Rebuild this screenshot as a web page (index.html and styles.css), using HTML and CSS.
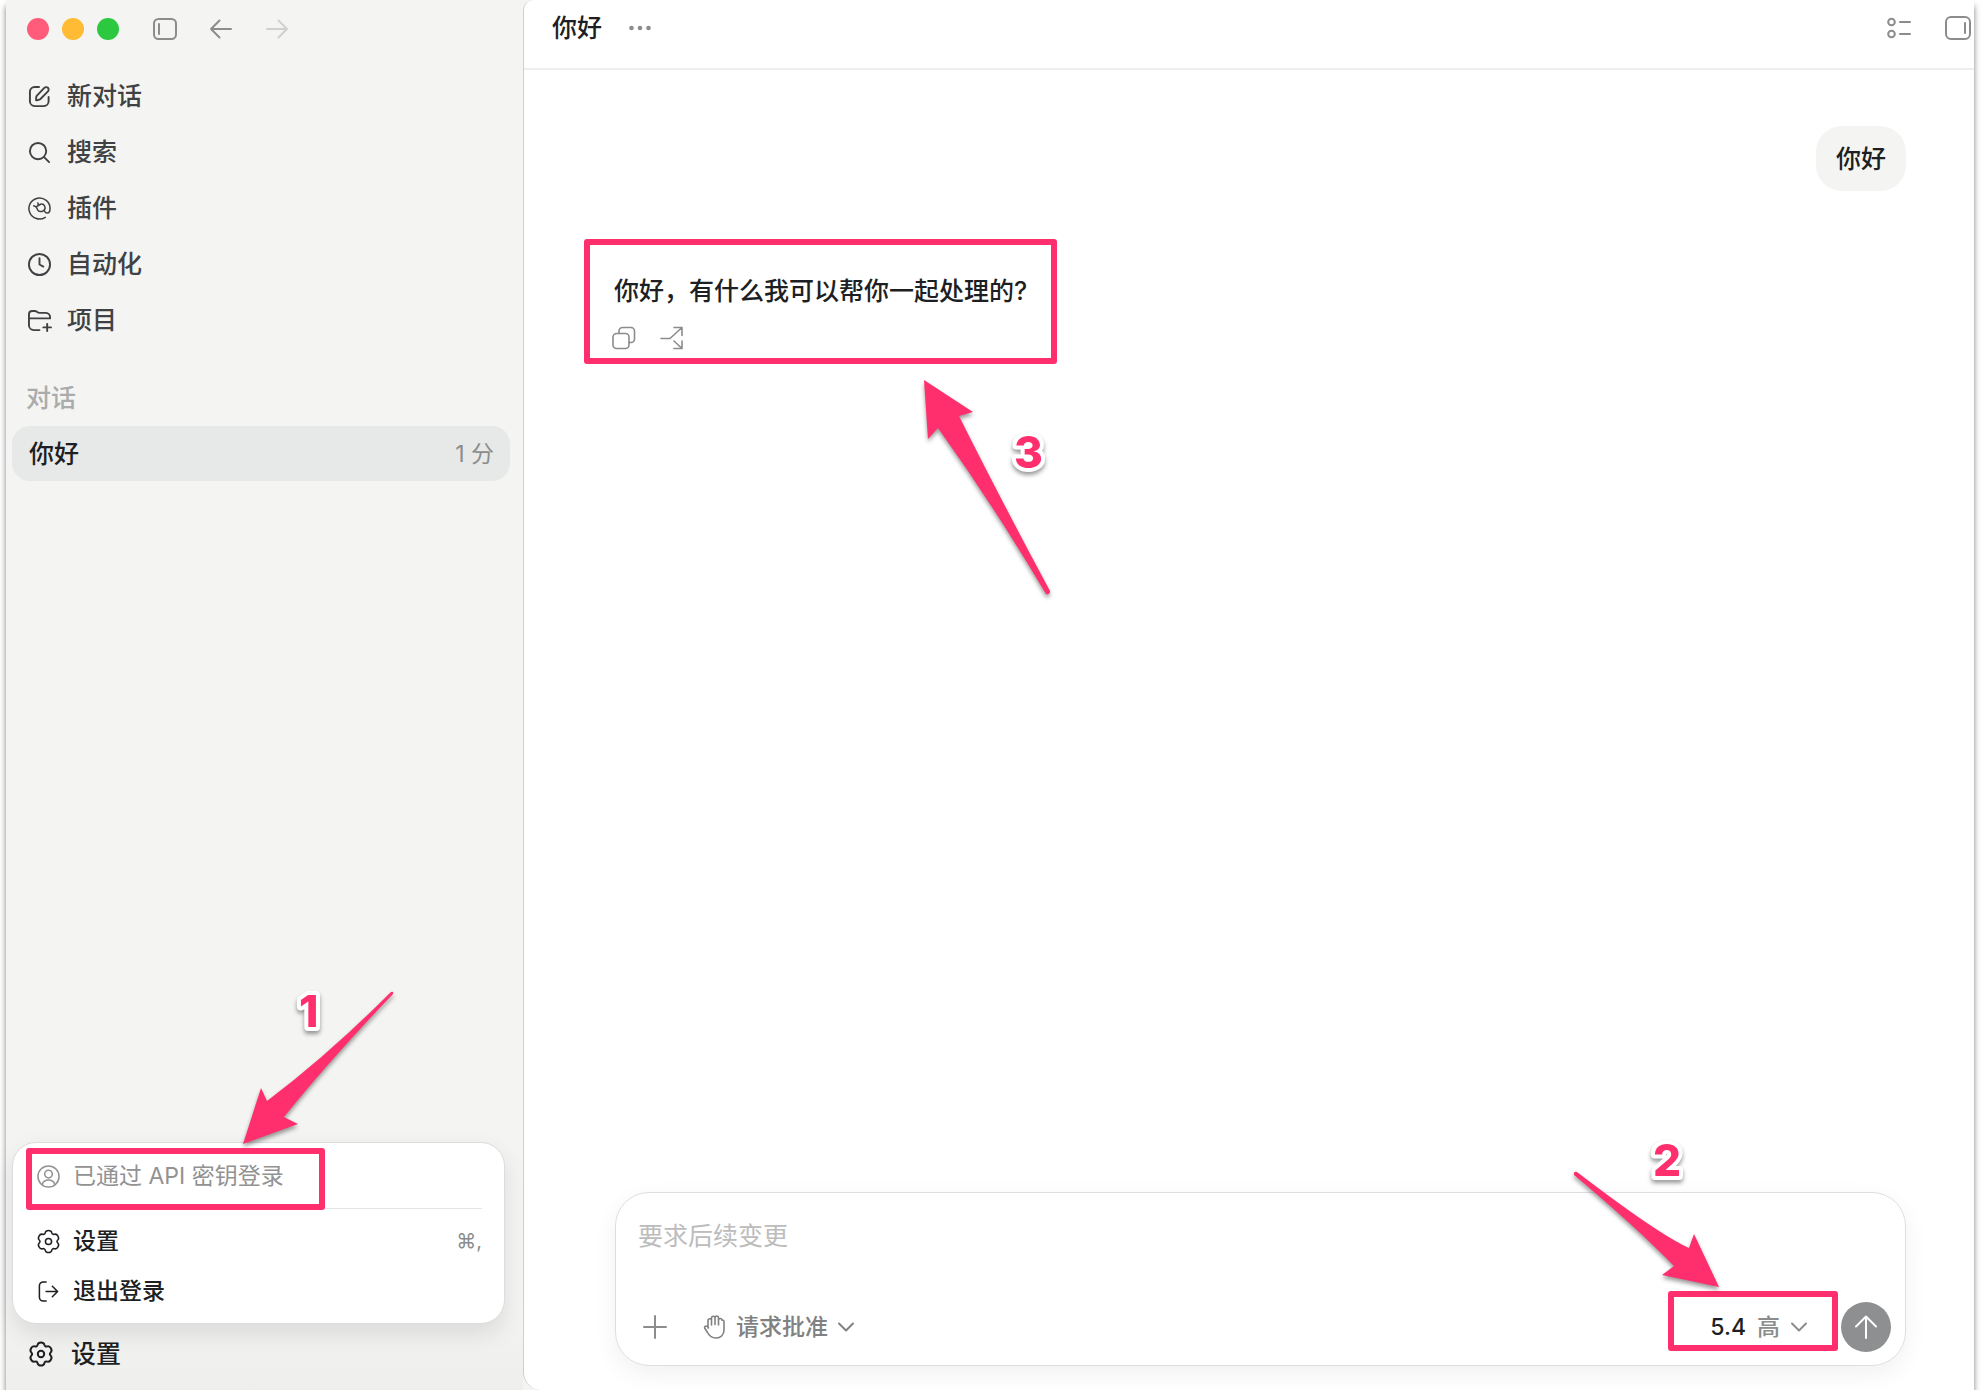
FILE: index.html
```html
<!DOCTYPE html>
<html lang="zh-CN">
<head>
<meta charset="UTF-8">
<meta name="viewport" content="width=device-width, initial-scale=1.0">
<title>你好</title>
<link rel="stylesheet" href="styles.css">
</head>
<body>
<!-- shared icons -->
<svg class="sprite" aria-hidden="true">
    <symbol id="gear" viewBox="0 0 24 24" overflow="visible">
        <path d="M12 .5Q14.900 .5 15.400 2.800 16 5.100 18.300 4.400 20.500 3.800 21.900 6.300 23.300 8.800 21.700 10.400 20 12 21.700 13.600 23.300 15.200 21.900 17.700 20.500 20.200 18.300 19.600 16 18.900 15.400 21.200 14.900 23.500 12 23.500 9.100 23.500 8.600 21.200 8 18.900 5.700 19.600 3.500 20.200 2.100 17.700.700 15.200 2.300 13.600 4 12 2.300 10.400.700 8.800 2.100 6.300 3.500 3.800 5.700 4.400 8 5.100 8.600 2.800 9.100.5 12 .5z"/>
        <circle cx="12" cy="12" r="3.200"/>
    </symbol>
    <symbol id="chevron" viewBox="0 0 16 16"><path d="M1 4.500l7 7 7-7"/></symbol>
</svg>
<div class="window">
    <aside class="sidebar">
        <div class="titlebar">
            <div class="lights"><i class="close"></i><i class="minimize"></i><i class="zoom"></i></div>
            <button class="icon-button" aria-label="切换边栏">
                <svg class="icon" viewBox="0 0 24 24"><rect x="1" y="2" width="22" height="20" rx="4.500"/><path d="M6 7v10"/></svg>
            </button>
            <button class="icon-button" aria-label="后退">
                <svg class="icon" viewBox="0 0 24 24"><path d="M22 12H2M10.500 3.500L2 12l8.500 8.500"/></svg>
            </button>
            <button class="icon-button disabled" aria-label="前进">
                <svg class="icon" viewBox="0 0 24 24"><path d="M2 12h20M13.500 3.500L22 12l-8.500 8.500"/></svg>
            </button>
        </div>
        <nav class="nav">
            <button class="nav-item">
                <svg class="icon" viewBox="0 0 24 24"><path d="M11.500 2H7a5 5 0 0 0-5 5v10a5 5 0 0 0 5 5h9.500a5 5 0 0 0 5-5v-4.500"/><path d="M8.500 16v-2.800c0-.8.3-1.500.8-2.100L17 3c1-1 2.800-1.100 3.800-.1s1 2.800 0 3.800L13 14.600c-.7.6-1.500 1-2.400 1.100z"/></svg>
                新对话
            </button>
            <button class="nav-item">
                <svg class="icon" viewBox="0 0 24 24"><circle cx="10.500" cy="10.500" r="8.500"/><path d="M16.800 16.800L22 22"/></svg>
                搜索
            </button>
            <button class="nav-item">
                <svg class="icon thin" viewBox="0 0 24 24"><path d="M18 21.200A11 11 0 1 1 23 12c0 2.800-1 4.700-3 4.700-1.200 0-2.200-.7-2.700-1.900"/><path d="M8.400 10.300l4.700-2.700c1.700-.6 3.500.3 4.200 1.800.8 1.700.3 4-1.400 5-1.900 1.200-4.600 1-5.700-.8-.7-1.100-.8-2.300-1.800-3.300zM6 9.200l2.400 1.100M10.300 6.300l.6 2.600"/></svg>
                插件
            </button>
            <button class="nav-item">
                <svg class="icon" viewBox="0 0 24 24"><circle cx="12" cy="12" r="11"/><path d="M12 5.500V12l4 2.200"/></svg>
                自动化
            </button>
            <button class="nav-item">
                <svg class="icon" viewBox="0 0 24 24"><path d="M12 22H6a5 5 0 0 1-5-5V5.500C1 3.300 2.500 2 4.500 2h2.300c1 0 1.800.3 2.500.9.9.7 1.600 1.100 2.700 1.100h6c2.800 0 5 1.700 5 4.200v1.600H1M20 15.500V23M16 19.200h8"/></svg>
                项目
            </button>
        </nav>
        <h2 class="section-title">对话</h2>
        <a class="thread" href="#"><span>你好</span><time>1 分</time></a>

        <div class="account">
            <div class="account-menu">
                <div class="menu-row muted">
                    <svg class="icon thin" viewBox="0 0 24 24"><circle cx="12" cy="12" r="11"/><circle cx="12" cy="9.500" r="4"/><path d="M5.500 20c1-3 3.500-4.300 6.500-4.300s5.500 1.300 6.500 4.300"/></svg>
                    已通过 API 密钥登录
                </div>
                <hr>
                <button class="menu-row">
                    <svg class="icon thin"><use href="#gear"/></svg>
                    设置
                    <kbd>⌘,</kbd>
                </button>
                <button class="menu-row">
                    <svg class="icon thin" viewBox="0 0 24 24"><path d="M9.500 2h-3a4 4 0 0 0-4 4v12a4 4 0 0 0 4 4h3M9.500 12H21M16 6.500l5.500 5.500-5.500 5.500"/></svg>
                    退出登录
                </button>
                <div class="frame frame-account"></div>
                <svg class="callout callout-1" viewBox="0 0 180 180">
                    <path d="M13 162L31 106 37 119Q98 73 161 10 164 9 163 12 98 80 54 135L68 142z"/>
                    <text x="69" y="45">1</text>
                </svg>
            </div>
            <button class="settings">
                <svg class="icon"><use href="#gear"/></svg>
                设置
            </button>
        </div>
    </aside>

    <main class="main">
        <header class="header">
            <h1>你好</h1>
            <button class="icon-button" aria-label="更多">
                <svg class="icon dots" viewBox="0 0 24 24"><circle cx="3.500" cy="12" r="2.300"/><circle cx="12" cy="12" r="2.300"/><circle cx="20.500" cy="12" r="2.300"/></svg>
            </button>
            <div class="header-actions">
                <button class="icon-button" aria-label="任务列表">
                    <svg class="icon" viewBox="0 0 24 24"><circle cx="4.500" cy="6" r="3.300"/><circle cx="4.500" cy="18" r="3.300"/><path d="M13 6h10M13 18h10"/></svg>
                </button>
                <button class="icon-button large" aria-label="切换右侧面板">
                    <svg class="icon" viewBox="0 0 26 26"><rect x="1" y="2" width="24" height="22" rx="5"/><path d="M20 8v10"/></svg>
                </button>
            </div>
        </header>

        <section class="conversation">
            <div class="bubble">你好</div>
            <article class="answer">
                <p>你好，有什么我可以帮你一起处理的?</p>
                <div class="answer-actions">
                    <button class="icon-button" aria-label="复制">
                        <svg class="icon thin" viewBox="0 0 24 24"><rect x="1" y="7.500" width="16" height="15" rx="3.500"/><path d="M7 7.500V5a3.500 3.500 0 0 1 3.500-3.500H19A3.500 3.500 0 0 1 22.500 5v8a3.500 3.500 0 0 1-3.500 3.500h-2"/></svg>
                    </button>
                    <button class="icon-button" aria-label="分支">
                        <svg class="icon thin" viewBox="0 0 24 24"><path d="M1 12.500h9l12-11M14 1.500h8v8M14 15l8 7.500M22 15v7.500h-8"/></svg>
                    </button>
                </div>
                <div class="frame"></div>
                <svg class="callout callout-3" viewBox="0 0 150 240">
                    <path d="M10 10L59 42 45 46Q86 128 136 221 136 225 132 224 80 136 24 58L14 69z"/>
                    <text x="100" y="98">3</text>
                </svg>
            </article>
        </section>

        <form class="composer">
            <textarea aria-label="消息" placeholder="要求后续变更" rows="1"></textarea>
            <div class="composer-bar">
                <button type="button" class="icon-button" aria-label="添加">
                    <svg class="icon" viewBox="0 0 24 24"><path d="M12 1v22M1 12h22"/></svg>
                </button>
                <label class="approval">
                    <svg class="icon thin" viewBox="0 0 24 24"><path d="M6 13V5.500a1.700 1.700 0 0 1 3.500 0V3a1.700 1.700 0 0 1 3.500 0v-.3a1.700 1.700 0 0 1 3.500 0v2.500a1.700 1.700 0 0 1 3.500 0V5a1.700 1.700 0 0 1 2 2v8c0 4.500-3 8-8 8-4.500 0-7-2.500-8.500-5.500l-2.700-4.300c-.6-1 .2-2.200 1.400-2.200 1.100 0 1.500.8 2.300 2zM9.500 4v6M13 3v6.500M16.500 4v6"/></svg>
                    <select aria-label="批准方式"><option>请求批准</option></select>
                    <svg class="chevron"><use href="#chevron"/></svg>
                </label>
                <div class="model-wrap">
                    <button type="button" class="model">5.4 <span>高</span><svg class="chevron"><use href="#chevron"/></svg></button>
                    <div class="frame frame-model"></div>
                    <svg class="callout callout-2" viewBox="0 0 180 180">
                        <path d="M151 156L126 103 121 117Q90 103 9 41 5 40 6 44 66 94 106 135L94 144z"/>
                        <text x="85" y="45">2</text>
                    </svg>
                </div>
                <button type="submit" class="send" aria-label="发送">
                    <svg class="icon" viewBox="0 0 24 24"><path d="M12 23V1.500M2 11.500l10-10 10 10"/></svg>
                </button>
            </div>
        </form>
    </main>
</div>
</body>
</html>
```
FILE: styles.css
```css
* {
    box-sizing: border-box;
}

body {
    margin: 0;
    background: #fff;
    font-family: Inter, "Noto Sans CJK SC", sans-serif;
    font-size: 25px;
    font-weight: 500;
    line-height: 32px;
    color: #1d1f23;
    overflow: hidden;
}

button,
select,
textarea {
    margin: 0;
    padding: 0;
    border: none;
    background: none;
    font: inherit;
    color: inherit;
    text-align: left;
}

h1,
h2,
p {
    margin: 0;
    font-size: 25px;
    font-weight: 500;
}

.sprite {
    display: none;
}

.icon,
.chevron {
    display: block;
    flex: none;
    width: 24px;
    height: 24px;
    fill: none;
    stroke: currentColor;
    stroke-width: 2;
    stroke-linecap: round;
    stroke-linejoin: round;
    overflow: visible;
}

.thin {
    stroke-width: 1.6;
}

.chevron {
    width: 16px;
    height: 16px;
}

.icon-button {
    color: #8b8c8c;
}

.icon-button.disabled {
    color: #cfd0cf;
}

.window {
    display: flex;
    min-height: 100vh;
    margin: 0 8px 0 6px;
    background: #f4f5f3;
    box-shadow: 0 6px 6px rgba(0, 0, 0, 0.5);
}

/* Sidebar */
.sidebar {
    display: flex;
    flex-direction: column;
    flex: none;
    width: 517px;
    padding-bottom: 8px;
    background: linear-gradient(#f4f5f3 94%, #eeeeec);
}

.titlebar {
    display: flex;
    align-items: center;
    gap: 32px;
    height: 57px;
    padding-left: 21px;
}

.lights {
    display: flex;
    gap: 13px;
    margin-right: 2px;
}

.lights i {
    width: 22px;
    height: 22px;
    border-radius: 50%;
}

.close {
    background: #ff5c7c;
}

.minimize {
    background: #ffbb33;
}

.zoom {
    background: #2bc840;
}

.nav {
    display: flex;
    flex-direction: column;
    margin-top: 11px;
}

.nav-item {
    display: flex;
    align-items: center;
    gap: 16px;
    height: 56px;
    padding-left: 22px;
    color: #404143;
}

.nav-item .icon {
    width: 23px;
    height: 23px;
}

.section-title {
    margin: 34px 0 12px 20px;
    color: #aaabaa;
}

.thread {
    display: flex;
    align-items: center;
    justify-content: space-between;
    height: 55px;
    margin: 0 13px 0 6px;
    padding: 0 16px 0 17px;
    border-radius: 18px;
    background: #e7e9e8;
    color: inherit;
    text-decoration: none;
}

.thread time {
    font-size: 23px;
    font-weight: 400;
    color: #8b8d8c;
}

.account {
    margin-top: auto;
}

.account-menu {
    position: relative;
    margin: 0 18px 2px 6px;
    padding: 8px 22px 7px 24px;
    border: 1px solid #dcdcdc;
    border-radius: 24px;
    background: #fff;
    box-shadow: 0 10px 24px rgba(0, 0, 0, 0.1);
    font-size: 23px;
}

.account-menu hr {
    margin: 7px 0;
    border: none;
    border-top: 1px solid #e4e4e4;
}

.menu-row {
    display: flex;
    align-items: center;
    gap: 13px;
    width: 100%;
    height: 50px;
}

.menu-row .icon {
    width: 23px;
    height: 23px;
}

.menu-row.muted {
    font-weight: 400;
    color: #929292;
}

.menu-row kbd {
    margin-left: auto;
    font-family: inherit;
    font-size: 20px;
    font-weight: 400;
    color: #8b8c8c;
}

.settings {
    display: flex;
    align-items: center;
    gap: 18px;
    width: 100%;
    height: 56px;
    padding-left: 23px;
}

/* Main panel */
.main {
    display: flex;
    flex-direction: column;
    flex: 1;
    border-left: 1px solid #cfcfcf;
    border-radius: 10px 0 0 18px;
    background: #fff;
}

.header {
    display: flex;
    align-items: center;
    gap: 26px;
    height: 70px;
    padding: 0 3px 12px 28px;
    border-bottom: 2px solid #eeeeee;
}

.dots {
    fill: currentColor;
    stroke: none;
}

.header-actions {
    display: flex;
    align-items: center;
    gap: 34px;
    margin-left: auto;
}

.large .icon {
    width: 26px;
    height: 26px;
}

.conversation {
    display: flex;
    flex-direction: column;
    flex: 1;
    padding: 56px 68px 0 60px;
}

.bubble {
    align-self: flex-end;
    padding: 17px 20px 16px;
    border-radius: 26px;
    background: #f4f4f3;
}

.answer {
    position: relative;
    align-self: flex-start;
    margin-top: 48px;
    padding: 36px 30px 14px 28px;
}

.answer p {
    padding-left: 2px;
}

.answer-actions {
    display: flex;
    gap: 24px;
    margin-top: 19px;
}

/* Composer */
.composer {
    margin: 0 68px 24px 91px;
    padding: 27px 14px 13px 22px;
    border: 1px solid #dedede;
    border-radius: 34px;
    box-shadow: 0 8px 24px rgba(0, 0, 0, 0.06);
}

.composer textarea {
    display: block;
    width: 100%;
    height: 32px;
    outline: none;
    resize: none;
    overflow: hidden;
}

.composer textarea::placeholder {
    font-weight: 400;
    color: #bcbcbc;
}

.composer-bar {
    display: flex;
    align-items: center;
    height: 50px;
    margin-top: 50px;
    padding-left: 5px;
    font-size: 23px;
    color: #808181;
}

.approval {
    display: flex;
    align-items: center;
    gap: 10px;
    margin-left: 35px;
}

.approval select {
    appearance: none;
}

.model-wrap {
    position: relative;
    margin-left: auto;
    padding: 14px 31px 14px 44px;
}

.model {
    display: flex;
    align-items: center;
    gap: 11px;
    color: #1d1f23;
}

.model span,
.model .chevron {
    color: #8b8c8c;
}

.send {
    display: flex;
    align-items: center;
    justify-content: center;
    width: 50px;
    height: 50px;
    margin-left: 3px;
    border-radius: 50%;
    background: #8e8f90;
    color: #fff;
}

/* Pink frames, arrows and numbers laid over the window */
.frame {
    position: absolute;
    inset: 0;
    border: 6px solid #ff2f6d;
    border-radius: 3px;
    pointer-events: none;
}

.frame-account {
    inset: 5px auto auto 13px;
    width: 299px;
    height: 62px;
}

.frame-model {
    inset: -6px 0 6px 2px;
}

.callout {
    position: absolute;
    width: 180px;
    height: 180px;
    fill: #ff2f6d;
    filter: drop-shadow(0 3px 2px rgba(0, 0, 0, 0.4));
    pointer-events: none;
}

.callout text {
    font-family: Inter, Arial, sans-serif;
    font-size: 44px;
    font-weight: 800;
    stroke: #fff;
    stroke-width: 8px;
    stroke-linejoin: round;
    paint-order: stroke;
}

.callout-1 {
    left: 217px;
    bottom: 161px;
}

.callout-2 {
    right: 90px;
    bottom: 46px;
}

.callout-3 {
    top: 131px;
    right: -7px;
    width: 150px;
    height: 240px;
}
```
